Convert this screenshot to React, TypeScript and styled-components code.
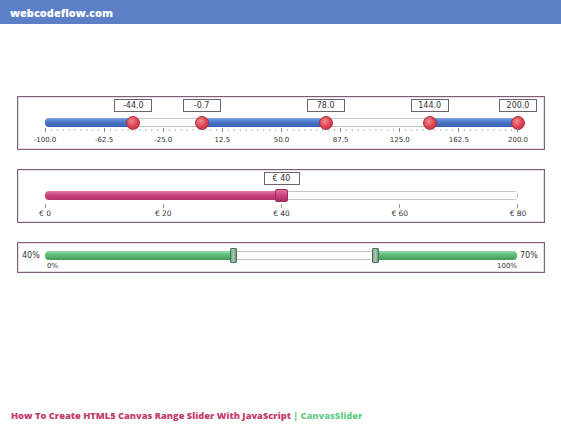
import React from "react";
import styled, { createGlobalStyle, css } from "styled-components";

const Global = createGlobalStyle`
  html, body { margin: 0; padding: 0; background: #ffffff; }
  body { width: 561px; height: 431px; overflow: hidden; font-family: "DejaVu Sans", Verdana, sans-serif; }
  #root { height: 431px; }
`;

const Page = styled.div`
  height: 431px;
  display: flex;
  flex-direction: column;
`;

const TopBar = styled.header`
  height: 24px;
  background: #5b80c6;
  display: flex;
  align-items: center;
  padding-left: 10px;
`;

const Brand = styled.span`
  font-family: "Open Sans", "DejaVu Sans", sans-serif;
  font-weight: 800;
  font-size: 11px;
  color: #ffffff;
`;

const Main = styled.main`
  flex: 1;
  display: flex;
  flex-direction: column;
  gap: 19px;
  padding: 72px 16px 0 17px;
`;

const Panel = styled.section<{ $pad: string; $h: number }>`
  height: ${(p) => p.$h}px;
  box-sizing: border-box;
  border: 1px solid #7d6076;
  box-shadow: 0 0 0 1px #e6dde3 inset;
  padding: ${(p) => p.$pad};
  display: flex;
  flex-direction: column;
`;

const Row = styled.div<{ $h: number }>`
  position: relative;
  height: ${(p) => p.$h}px;
  flex: none;
`;

const Spacer = styled.div<{ $h: number }>`
  height: ${(p) => p.$h}px;
  flex: none;
`;

/* value bubble above a handle */
const Bubble = styled.div<{ $w: number }>`
  position: absolute;
  top: 0;
  width: ${(p) => p.$w}px;
  height: 13px;
  margin-left: -${(p) => p.$w / 2}px;
  box-sizing: border-box;
  border: 1px solid #6f6270;
  background: #ffffff;
  font-size: 8px;
  line-height: 11px;
  color: #333333;
  text-align: center;
`;

const Track = styled.div`
  position: relative;
  height: 9px;
  flex: none;
`;

const Segment = styled.div<{ $tone: "blue" | "pink" | "green" | "empty" }>`
  position: absolute;
  top: 0;
  bottom: 0;
  box-sizing: border-box;
  ${(p) =>
    p.$tone === "empty"
      ? css`
          background: #fcfcfc;
          border: 1px solid #c4c4c4;
        `
      : p.$tone === "blue"
      ? css`
          background: linear-gradient(#7ea3e2, #4a76c8 45%, #3a62b0);
        `
      : p.$tone === "pink"
      ? css`
          background: linear-gradient(#e27aa6, #c9447d 45%, #b0356a);
        `
      : css`
          background: linear-gradient(#8fdca2, #5cbc78 45%, #429a5c);
        `}
`;

const TrackShell = styled.div`
  position: absolute;
  inset: 0;
  border-radius: 4px;
  overflow: hidden;
`;

const Knob = styled.div`
  position: absolute;
  top: 50%;
  width: 14px;
  height: 14px;
  margin: -7px 0 0 -7px;
  border-radius: 50%;
  box-sizing: border-box;
  border: 1px solid #b02c3c;
  background: radial-gradient(circle at 40% 35%, #f08a92, #d9404e 55%, #bb2d3c);
`;

const SquareKnob = styled.div`
  position: absolute;
  top: 50%;
  width: 13px;
  height: 13px;
  margin: -6.5px 0 0 -6.5px;
  box-sizing: border-box;
  border: 1px solid #9a2c5a;
  border-radius: 2px;
  background: linear-gradient(#e06fa0, #c43d78 60%, #a83066);
`;

const BarKnob = styled.div`
  position: absolute;
  top: 50%;
  width: 7px;
  height: 15px;
  margin: -7.5px 0 0 -3.5px;
  box-sizing: border-box;
  border: 1px solid #4e6e58;
  border-radius: 1px;
  background: linear-gradient(90deg, #7faa8a, #a6c8ae 50%, #6f9a7b);
`;

const TickLabel = styled.span<{ $size: number }>`
  position: absolute;
  top: 0;
  transform: translateX(-50%);
  font-size: ${(p) => p.$size}px;
  line-height: 10px;
  color: #333333;
  white-space: nowrap;
`;

const EdgeLabel = styled.span<{ $side: "left" | "right" }>`
  position: absolute;
  top: 0;
  ${(p) => (p.$side === "left" ? "left: 2px;" : "right: 0;")}
  font-size: 7px;
  line-height: 10px;
  color: #333333;
`;

const ScaleSvg = styled.svg`
  display: block;
  width: 100%;
  height: 100%;
`;

const SideRow = styled.div<{ $h?: number }>`
  display: flex;
  align-items: center;
  flex: none;
  ${(p) => (p.$h ? `height: ${p.$h}px;` : "")}
`;

const SideLabel = styled.span<{ $align: "left" | "right" }>`
  width: 27px;
  font-size: 8px;
  color: #333333;
  box-sizing: border-box;
  ${(p) => (p.$align === "left" ? "padding-left: 4px;" : "padding-left: 3px;")}
`;

const Grow = styled.div`
  flex: 1;
`;

const Footer = styled.footer`
  padding: 0 0 9px 11px;
  font-family: "Open Sans", "DejaVu Sans", sans-serif;
  font-weight: 800;
  font-size: 9.3px;
  color: #c23d6c;
`;

const Accent = styled.span`
  color: #66cf8a;
`;

const pct = (v: number, min: number, max: number) => ((v - min) / (max - min)) * 100;

/* ---------- multi-handle range (blue) ---------- */
function MultiRange() {
  const min = -100;
  const max = 200;
  const values = [-44.0, -0.7, 78.0, 144.0, 200.0];
  const stops = [min, ...values];
  const labels = [-100, -62.5, -25, 12.5, 50, 87.5, 125, 162.5, 200];
  return (
    <Panel $h={54} $pad="2px 26px 0 27px">
      <Row $h={13}>
        {values.map((v) => (
          <Bubble key={v} $w={38} style={{ left: `${pct(v, min, max)}%` }}>
            {v.toFixed(1)}
          </Bubble>
        ))}
      </Row>
      <Spacer $h={6} />
      <Track>
        <TrackShell>
          {stops.slice(0, -1).map((s, i) => (
            <Segment
              key={s}
              $tone={i % 2 === 0 ? "blue" : "empty"}
              style={{ left: `${pct(s, min, max)}%`, width: `${pct(stops[i + 1], min, max) - pct(s, min, max)}%` }}
            />
          ))}
        </TrackShell>
        {values.map((v) => (
          <Knob key={v} style={{ left: `${pct(v, min, max)}%` }} />
        ))}
      </Track>
      <Row $h={6}>
        <ScaleSvg viewBox="0 0 472 6" preserveAspectRatio="none">
          {Array.from({ length: 81 }, (_, i) => {
            const x = 0.5 + (i * 471) / 80;
            const major = i % 10 === 0;
            return (
              <line
                key={i}
                x1={x}
                x2={x}
                y1={major ? 1 : 2}
                y2={major ? 5 : 4}
                stroke={major ? "#888" : "#b8b8b8"}
                strokeWidth={1}
              />
            );
          })}
        </ScaleSvg>
      </Row>
      <Spacer $h={2} />
      <Row $h={10}>
        {labels.map((l) => (
          <TickLabel key={l} $size={7} style={{ left: `${pct(l, min, max)}%` }}>
            {l.toFixed(1)}
          </TickLabel>
        ))}
      </Row>
    </Panel>
  );
}

/* ---------- single value (pink, euro) ---------- */
function EuroSlider() {
  const min = 0;
  const max = 80;
  const value = 40;
  const labels = [0, 20, 40, 60, 80];
  const p = pct(value, min, max);
  return (
    <Panel $h={54} $pad="2px 26px 0 27px">
      <Row $h={13}>
        <Bubble $w={36} style={{ left: `${p}%` }}>
          € {value}
        </Bubble>
      </Row>
      <Spacer $h={6} />
      <Track>
        <TrackShell>
          <Segment $tone="pink" style={{ left: 0, width: `${p}%` }} />
          <Segment $tone="empty" style={{ left: `${p}%`, right: 0 }} />
        </TrackShell>
        <SquareKnob style={{ left: `${p}%` }} />
      </Track>
      <Row $h={9}>
        <ScaleSvg viewBox="0 0 472 9" preserveAspectRatio="none">
          {labels.map((l) => {
            const x = 0.5 + (pct(l, min, max) / 100) * 471;
            return <line key={l} x1={x} x2={x} y1={4} y2={8} stroke="#999" strokeWidth={1} />;
          })}
        </ScaleSvg>
      </Row>
      <Row $h={10}>
        {labels.map((l) => (
          <TickLabel key={l} $size={7.5} style={{ left: `${pct(l, min, max)}%` }}>
            € {l}
          </TickLabel>
        ))}
      </Row>
    </Panel>
  );
}

/* ---------- two-handle percent range (green) ---------- */
function PercentRange() {
  const lo = 40;
  const hi = 70;
  return (
    <Panel $h={31} $pad="8px 0 0 0">
      <SideRow>
        <SideLabel $align="left">{lo}%</SideLabel>
        <Grow>
          <Track>
            <TrackShell>
              <Segment $tone="green" style={{ left: 0, width: `${lo}%` }} />
              <Segment $tone="empty" style={{ left: `${lo}%`, width: `${hi - lo}%` }} />
              <Segment $tone="green" style={{ left: `${hi}%`, right: 0 }} />
            </TrackShell>
            <BarKnob style={{ left: `${lo}%` }} />
            <BarKnob style={{ left: `${hi}%` }} />
          </Track>
        </Grow>
        <SideLabel $align="right">{hi}%</SideLabel>
      </SideRow>
      <SideRow $h={10} style={{ marginTop: 1 }}>
        <SideLabel $align="left" />
        <Grow>
          <Row $h={10}>
            <EdgeLabel $side="left">0%</EdgeLabel>
            <EdgeLabel $side="right">100%</EdgeLabel>
          </Row>
        </Grow>
        <SideLabel $align="right" />
      </SideRow>
    </Panel>
  );
}

export default function App() {
  return (
    <Page>
      <Global />
      <TopBar>
        <Brand>webcodeflow.com</Brand>
      </TopBar>
      <Main>
        <MultiRange />
        <EuroSlider />
        <PercentRange />
      </Main>
      <Footer>
        How To Create HTML5 Canvas Range Slider With JavaScript <Accent>| CanvasSlider</Accent>
      </Footer>
    </Page>
  );
}
